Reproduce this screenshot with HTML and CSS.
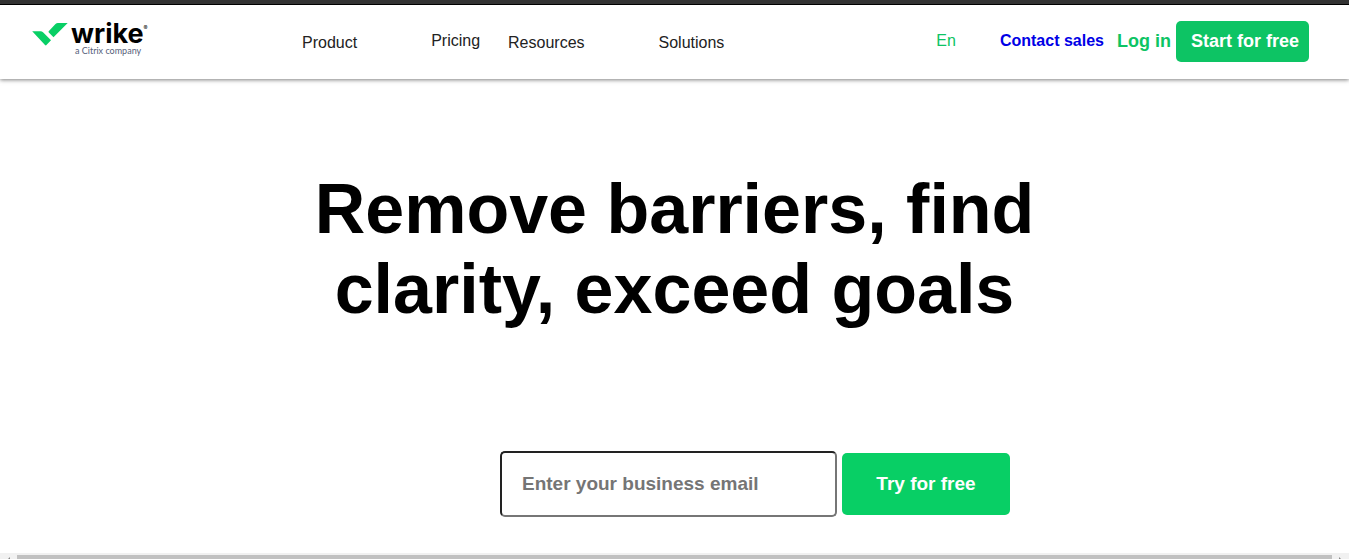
FILE: index.html
```
<!DOCTYPE html>
<html lang="en">
<head>
<meta charset="utf-8">
<title>Wrike</title>
<link rel="stylesheet" href="styles.css">
</head>
<body>
<header class="header">
  <a class="logo" href="#" aria-label="Wrike, a Citrix company">
    <svg class="logo-mark" viewBox="0 0 36 24" aria-hidden="true">
      <path d="M0.200 8.300H8.500Q10 8.300 11 9.300L19 17.200L14.200 22.300Q13.600 22.700 13 22.100Z"/>
      <path d="M35.700 0H26Q24.500 0 23.500 1L16.700 8.300Q16.300 8.900 16.800 9.400L21.500 14.200Z"/>
    </svg>
    <span class="logo-text">
      <span class="logo-name">wrike<span class="logo-reg">®</span></span>
      <span class="logo-tag">a Citrix company</span>
    </span>
  </a>
  <nav class="nav">
    <button class="menu" type="button">Product</button>
    <a class="nav-link" href="#">Pricing</a>
    <button class="menu" type="button">Resources</button>
    <button class="menu" type="button">Solutions</button>
  </nav>
  <div class="actions">
    <a class="lang" href="#">En</a>
    <a class="contact" href="#">Contact sales</a>
    <a class="login" href="#">Log in</a>
    <button class="start" type="button">Start for free</button>
  </div>
</header>
<main class="hero">
  <h1 class="title">Remove barriers, find clarity, exceed goals</h1>
  <form class="signup">
    <input class="email" type="email" placeholder="Enter your business email" aria-label="Business email">
    <button class="try" type="button">Try for free</button>
  </form>
</main>
<div class="scrollbar">
  <svg class="arrow" viewBox="0 0 17 4" aria-hidden="true"><path d="M10 2V4H8Z"/></svg>
  <div class="thumb"></div>
  <svg class="arrow" viewBox="0 0 17 4" aria-hidden="true"><path d="M7 2V4H9Z"/></svg>
</div>
</body>
</html>
```
FILE: styles.css
```
* { box-sizing: border-box; }
body {
  margin: 0;
  min-height: 100vh;
  display: flex;
  flex-direction: column;
  background: #fff;
  border-top: 4px solid #333;
  font-family: "Liberation Sans", Arial, sans-serif;
  font-size: 16px;
  color: #000;
}
a { text-decoration: none; color: inherit; }
button { font-family: inherit; border: 0; cursor: pointer; }
.header {
  display: flex;
  align-items: center;
  height: 75px;
  padding: 0 40px 0 32px;
  border-top: 1px solid #000;
  background: #fff;
  box-shadow: 0 1px 4px rgba(0, 0, 0, 0.5);
}
.logo {
  display: flex;
  align-items: flex-start;
  gap: 3px;
  width: 116px;
  padding-bottom: 6px;
}
.logo-mark { flex: none; width: 36px; height: 24px; fill: #08cf65; }
.logo-text { display: flex; flex-direction: column; }
.logo-name {
  display: flex;
  font: 700 27px/22px Inter, sans-serif;
}
.logo-reg { font-size: 6px; line-height: 10px; font-weight: 400; }
.logo-tag {
  padding-left: 4px;
  font: 400 9px/11px Lato, sans-serif;
  color: #56607a;
  white-space: nowrap;
}
.nav {
  display: flex;
  align-items: center;
  gap: 28px;
  margin-left: 154px;
  color: #222;
}
.menu {
  padding: 2px 46px 0 0;
  background: none;
  color: inherit;
  font-size: 16px;
}
.nav-link { padding-bottom: 2px; }
.actions {
  display: flex;
  align-items: center;
  margin-left: auto;
  padding-bottom: 2px;
}
.lang { margin-right: 44px; color: #0dc464; }
.contact { margin-right: 13px; font-weight: 700; color: #0000e6; }
.login { margin-right: 5px; font-size: 18px; font-weight: 700; color: #0dc464; }
.start {
  height: 41px;
  padding: 0 10px 0 15px;
  border-radius: 5px;
  background: #0dc464;
  color: #fff;
  font-size: 18px;
  font-weight: 700;
}
.hero {
  flex: 1;
  display: flex;
  flex-direction: column;
  align-items: center;
  padding: 90px 24px 36px;
}
.title {
  max-width: 800px;
  margin: 0 0 122px;
  font-size: 70px;
  line-height: 80px;
  text-align: center;
}
.signup {
  display: flex;
  align-items: center;
  gap: 5px;
  padding-left: 161px;
}
.email {
  width: 337px;
  height: 66px;
  padding: 0 20px;
  border: 2px solid;
  border-color: #222 #767676 #767676 #222;
  border-radius: 5px;
  background: #fff;
  font: 700 19px "Liberation Sans", Arial, sans-serif;
}
.email::placeholder { color: #757575; }
.try {
  width: 168px;
  height: 62px;
  border-radius: 5px;
  background: #08cf65;
  color: #fff;
  font-size: 19px;
  font-weight: 700;
}
.scrollbar {
  display: flex;
  height: 6px;
  padding-top: 2px;
  background: #f1f1f1;
}
.thumb { flex: 1; height: 4px; background: #c1c1c1; }
.arrow { width: 17px; height: 4px; fill: #888; }
```
